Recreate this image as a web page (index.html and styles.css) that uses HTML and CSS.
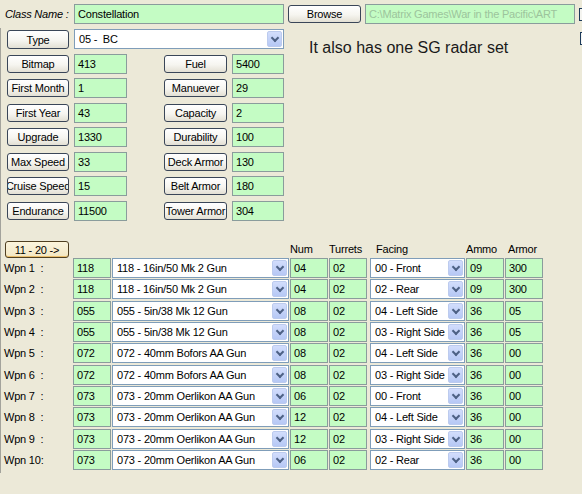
FILE: index.html
```html
<!DOCTYPE html>
<html>
<head>
<meta charset="utf-8">
<link rel="stylesheet" href="styles.css">
</head>
<body>
<div class="page">
  <div class="toprow">
    <div class="cls-label">Class Name :</div>
    <div class="fld name-field">Constellation</div>
    <div class="btn browse"><span>Browse</span></div>
    <div class="fld path">C:\Matrix Games\War in the Pacific\ART</div>
    <div class="chk chk1"></div>
  </div>

  <div class="panel">
    <div class="upper">
      <div class="stats">
        <div class="btn"><span>Type</span></div>
        <div class="combo type-combo"><span class="ctext">05 -&nbsp; BC</span><span class="arrow"></span></div>

        <div class="btn"><span>Bitmap</span></div>
        <div class="fld">413</div>
        <div class="btn rbtn"><span>Fuel</span></div>
        <div class="fld">5400</div>

        <div class="btn"><span>First Month</span></div>
        <div class="fld">1</div>
        <div class="btn rbtn"><span>Manuever</span></div>
        <div class="fld">29</div>

        <div class="btn"><span>First Year</span></div>
        <div class="fld">43</div>
        <div class="btn rbtn"><span>Capacity</span></div>
        <div class="fld">2</div>

        <div class="btn"><span>Upgrade</span></div>
        <div class="fld">1330</div>
        <div class="btn rbtn"><span>Durability</span></div>
        <div class="fld">100</div>

        <div class="btn"><span>Max Speed</span></div>
        <div class="fld">33</div>
        <div class="btn rbtn"><span>Deck Armor</span></div>
        <div class="fld">130</div>

        <div class="btn"><span>Cruise Speed</span></div>
        <div class="fld">15</div>
        <div class="btn rbtn"><span>Belt Armor</span></div>
        <div class="fld">180</div>

        <div class="btn"><span>Endurance</span></div>
        <div class="fld">11500</div>
        <div class="btn rbtn"><span>Tower Armor</span></div>
        <div class="fld">304</div>
      </div>
      <div class="note-col">
        <div class="note">It also has one SG radar set</div>
        <div class="chk chk2"></div>
      </div>
    </div>

    <div class="wgrid whead">
      <div class="btn next"><span>11 - 20 -&gt;</span></div>
      <div></div>
      <div></div>
      <div class="hl">Num</div>
      <div class="hl">Turrets</div>
      <div class="hl hfacing">Facing</div>
      <div class="hl">Ammo</div>
      <div class="hl harmor">Armor</div>
    </div>

    <div class="wgrid wrows">
      <div class="wl">Wpn 1 &nbsp;:</div><div class="fld">118</div><div class="combo"><span class="ctext">118 - 16in/50 Mk 2 Gun</span><span class="arrow"></span></div><div class="fld">04</div><div class="fld">02</div><div class="combo facing"><span class="ctext">00 - Front</span><span class="arrow"></span></div><div class="fld">09</div><div class="fld">300</div>
      <div class="wl">Wpn 2 &nbsp;:</div><div class="fld">118</div><div class="combo"><span class="ctext">118 - 16in/50 Mk 2 Gun</span><span class="arrow"></span></div><div class="fld">04</div><div class="fld">02</div><div class="combo facing"><span class="ctext">02 - Rear</span><span class="arrow"></span></div><div class="fld">09</div><div class="fld">300</div>
      <div class="wl">Wpn 3 &nbsp;:</div><div class="fld">055</div><div class="combo"><span class="ctext">055 - 5in/38 Mk 12 Gun</span><span class="arrow"></span></div><div class="fld">08</div><div class="fld">02</div><div class="combo facing"><span class="ctext">04 - Left Side</span><span class="arrow"></span></div><div class="fld">36</div><div class="fld">05</div>
      <div class="wl">Wpn 4 &nbsp;:</div><div class="fld">055</div><div class="combo"><span class="ctext">055 - 5in/38 Mk 12 Gun</span><span class="arrow"></span></div><div class="fld">08</div><div class="fld">02</div><div class="combo facing"><span class="ctext">03 - Right Side</span><span class="arrow"></span></div><div class="fld">36</div><div class="fld">05</div>
      <div class="wl">Wpn 5 &nbsp;:</div><div class="fld">072</div><div class="combo"><span class="ctext">072 - 40mm Bofors AA Gun</span><span class="arrow"></span></div><div class="fld">08</div><div class="fld">02</div><div class="combo facing"><span class="ctext">04 - Left Side</span><span class="arrow"></span></div><div class="fld">36</div><div class="fld">00</div>
      <div class="wl">Wpn 6 &nbsp;:</div><div class="fld">072</div><div class="combo"><span class="ctext">072 - 40mm Bofors AA Gun</span><span class="arrow"></span></div><div class="fld">08</div><div class="fld">02</div><div class="combo facing"><span class="ctext">03 - Right Side</span><span class="arrow"></span></div><div class="fld">36</div><div class="fld">00</div>
      <div class="wl">Wpn 7 &nbsp;:</div><div class="fld">073</div><div class="combo"><span class="ctext">073 - 20mm Oerlikon AA Gun</span><span class="arrow"></span></div><div class="fld">06</div><div class="fld">02</div><div class="combo facing"><span class="ctext">00 - Front</span><span class="arrow"></span></div><div class="fld">36</div><div class="fld">00</div>
      <div class="wl">Wpn 8 &nbsp;:</div><div class="fld">073</div><div class="combo"><span class="ctext">073 - 20mm Oerlikon AA Gun</span><span class="arrow"></span></div><div class="fld">12</div><div class="fld">02</div><div class="combo facing"><span class="ctext">04 - Left Side</span><span class="arrow"></span></div><div class="fld">36</div><div class="fld">00</div>
      <div class="wl">Wpn 9 &nbsp;:</div><div class="fld">073</div><div class="combo"><span class="ctext">073 - 20mm Oerlikon AA Gun</span><span class="arrow"></span></div><div class="fld">12</div><div class="fld">02</div><div class="combo facing"><span class="ctext">03 - Right Side</span><span class="arrow"></span></div><div class="fld">36</div><div class="fld">00</div>
      <div class="wl">Wpn 10:</div><div class="fld">073</div><div class="combo"><span class="ctext">073 - 20mm Oerlikon AA Gun</span><span class="arrow"></span></div><div class="fld">06</div><div class="fld">02</div><div class="combo facing"><span class="ctext">02 - Rear</span><span class="arrow"></span></div><div class="fld">36</div><div class="fld">00</div>
    </div>
  </div>
</div>
</body>
</html>
```
FILE: styles.css
```css
html, body {
  margin: 0;
  padding: 0;
  background: #ece9d8;
  overflow: hidden;
}
body {
  width: 582px;
  height: 494px;
  font-family: "Liberation Sans", Arial, sans-serif;
  font-size: 11px;
  letter-spacing: -0.2px;
  color: #000;
}
.page {
  width: 600px;
  padding-top: 4px;
}
* { box-sizing: border-box; }

/* generic controls */
.fld {
  height: 20px;
  background: #c4fcc4;
  border: 1px solid #8a9c9c;
  padding-left: 3px;
  line-height: 18px;
  white-space: nowrap;
  overflow: hidden;
}
.btn {
  height: 18px;
  border: 1px solid #3a4658;
  border-radius: 3px;
  background: linear-gradient(#ffffff, #f6f5f0 55%, #e3e0d4);
  display: flex;
  justify-content: center;
  align-items: center;
  overflow: hidden;
  white-space: nowrap;
  align-self: center;
}
.btn span { flex: none; }
.combo {
  height: 20px;
  background: #fff;
  border: 1px solid #7f9db9;
  display: flex;
  align-items: center;
  overflow: hidden;
  white-space: nowrap;
}
.ctext {
  flex: 1;
  padding-left: 4px;
  overflow: hidden;
}
.arrow {
  flex: none;
  width: 15px;
  height: 16px;
  margin-right: 1px;
  background: linear-gradient(#d2ddfc, #b6c8f5);
  border: 1px solid #bccbee;
  border-radius: 2px;
  display: flex;
  justify-content: center;
  align-items: center;
}
.arrow::after {
  content: "";
  width: 4px;
  height: 4px;
  border-right: 2px solid #4d6185;
  border-bottom: 2px solid #4d6185;
  transform: translateY(-1px) rotate(45deg);
}
.chk {
  flex: none;
  width: 13px;
  height: 13px;
  border: 1px solid #1c3a5a;
  background: #f4f4f0;
}

/* top row */
.toprow {
  display: flex;
  align-items: flex-start;
  height: 20px;
}
.cls-label {
  width: 74px;
  padding-left: 5px;
  line-height: 20px;
  font-style: italic;
  white-space: nowrap;
}
.name-field { width: 210px; }
.browse {
  width: 73px;
  margin-left: 4px;
  margin-top: 1px;
  align-self: flex-start;
}
.path {
  width: 210px;
  margin-left: 4px;
  color: #9cc49c;
}
.chk1 {
  margin-left: 4px;
  margin-top: 4px;
}

/* panel */
.panel {
  margin-top: 4px;
  height: 445px;
  border-left: 1px solid #a3a39c;
}
.upper {
  display: flex;
  align-items: flex-start;
}
.stats {
  padding-top: 1px;
  padding-left: 6px;
  display: grid;
  grid-template-columns: 62px 53px 95px 52px;
  grid-auto-rows: 20px;
  column-gap: 5px;
  row-gap: 4.5px;
}
.stats .btn { width: 62px; }
.stats .rbtn { width: 63px; justify-self: end; }
.type-combo { grid-column: 2 / 5; }
.stats > .btn:first-child { height: 19px; align-self: end; }

.note-col {
  flex: 1;
  margin-left: 25px;
  display: flex;
  align-items: flex-start;
}
.note {
  flex: 1;
  margin-top: 11px;
  font-size: 16px;
  letter-spacing: 0;
  line-height: 18px;
  color: #1a1a1a;
  white-space: nowrap;
}
.chk2 {
  margin-top: 4px;
  margin-right: 7px;
}

/* weapons */
.wgrid {
  display: grid;
  grid-template-columns: 71px 38px 177px 38px 38px 97px 38px 38px;
  column-gap: 1px;
}
.whead {
  margin-top: 20.5px;
  height: 17px;
  align-items: center;
}
.next {
  margin-left: 4px;
  width: 64px;
  height: 17px;
  border-color: #4f3f22;
  background: linear-gradient(#fbf5df, #f3e7c2);
  box-shadow: inset 0 -1px 0 #e8bd6a, inset 0 1px 0 #fff6d8;
}
.hl { white-space: nowrap; line-height: 17px; }
.hfacing { padding-left: 8px; }
.harmor { padding-left: 3px; }

.wrows {
  grid-auto-rows: 20px;
  row-gap: 1.33px;
}
.wl {
  padding-left: 3px;
  line-height: 20px;
  white-space: nowrap;
}
.facing { margin-left: 2px; }
```
